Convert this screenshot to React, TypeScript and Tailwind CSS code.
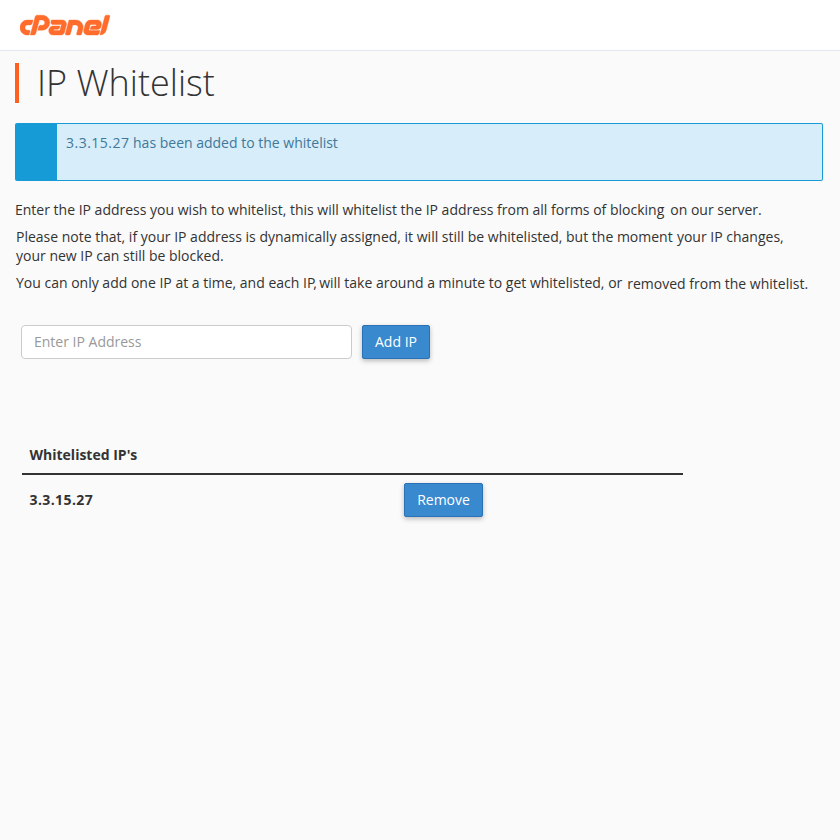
import React from "react";
import { FaCpanel } from "react-icons/fa";

function Button({ children, className }: { children: React.ReactNode; className: string }) {
  return (
    <button
      className={`h-[34px] rounded-[2px] border border-[#2a72b5] bg-[#3989cf] text-center text-[14px] leading-[20px] text-white shadow-[0_2px_5px_rgba(0,0,0,0.26)] ${className}`}
    >
      {children}
    </button>
  );
}

export default function App() {
  return (
    <div className="min-h-screen bg-[#fafafa] font-['Open_Sans',sans-serif] text-[14px] leading-[19px] text-[#333333]">
      <header className="flex h-[51px] items-center overflow-hidden border-b border-[#e1e8f0] bg-white pt-[2px] pl-5">
        <FaCpanel className="h-[72px] w-[90px] shrink-0 text-[#ff6c2c]" strokeWidth={3} />
      </header>
      <main className="pl-[15px]">
        <h1 className="mt-3 h-10 border-l-4 border-[#ff5f1f] pl-[18px] text-[36px] leading-[39px] font-light">
          IP Whitelist
        </h1>
        <div className="mt-5 h-[58px] w-[808px] rounded-[2px] border border-l-[42px] border-[#179bd7] bg-[#d7edf9] pt-[9px] pl-[9px] text-[#41789a]">
          <span className="tracking-[0.48px]">3.3.15.27</span> has been added to the whitelist
        </div>
        <p className="mt-[19px] whitespace-pre">
          Enter the IP address you wish to whitelist, this will whitelist the IP address from all forms of blocking
          <span className="ml-[6px]">on our server.</span>
        </p>
        <p className="mt-2 ml-px whitespace-nowrap">
          Please note that, if your IP address is dynamically assigned, it will still be whitelisted, but the moment <span className="ml-[0.6px]">your IP changes,</span>
          <br />
          your new IP can still be blocked.
        </p>
        <p className="mt-2 ml-px flex whitespace-nowrap">
          <span>
            You can only add one IP at a time, and each I<span className="tracking-[-2px]">P</span>
            <span className="tracking-[-0.7px]">, </span>will take around a minute to get whitelisted, or
          </span>
          <span className="mt-px ml-[5px]">removed from the whitelist.</span>
        </p>
        <form className="mt-8 ml-[6px] flex gap-[10px]">
          <input
            className="h-[34px] w-[331px] rounded-[4px] border border-[#cccccc] bg-white px-3 pb-[2px] text-[14px] placeholder:text-[#999999]"
            placeholder="Enter IP Address"
          />
          <Button className="w-[68px]">Add IP</Button>
        </form>
        <section className="mt-[86px] ml-[7px] w-[661px] font-bold">
          <div className="h-[30px] border-b-2 border-[#333333] pl-[7.5px]">Whitelisted IP's</div>
          <div className="flex items-center pt-2 pl-[7.5px]">
            <span className="mb-[2px] w-[374.5px] tracking-[0.4px]">3.3.15.27</span>
            <Button className="w-[79px] font-normal">Remove</Button>
          </div>
        </section>
      </main>
    </div>
  );
}
